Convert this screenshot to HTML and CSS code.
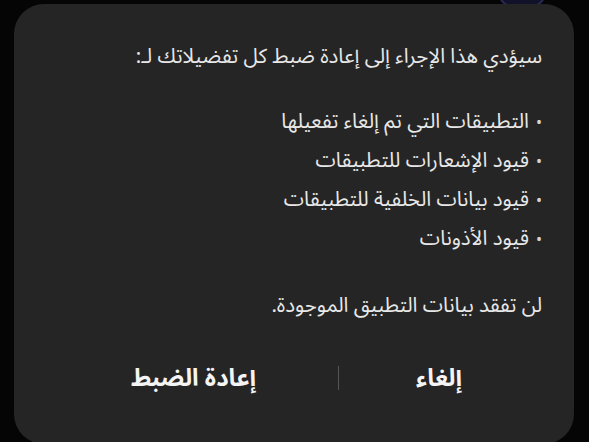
FILE: index.html
```html
<!DOCTYPE html>
<html lang="ar" dir="rtl">
<head>
<meta charset="utf-8">
<link rel="stylesheet" href="styles.css">
</head>
<body>
<div class="backdrop">
  <span class="bg-avatar"></span>
</div>
<div class="dialog">
  <p class="lead">سيؤدي هذا الإجراء إلى إعادة ضبط كل تفضيلاتك لـ:</p>
  <ul class="items">
    <li><span class="dot">•</span>التطبيقات التي تم إلغاء تفعيلها</li>
    <li><span class="dot">•</span>قيود الإشعارات للتطبيقات</li>
    <li><span class="dot">•</span>قيود بيانات الخلفية للتطبيقات</li>
    <li><span class="dot">•</span>قيود الأذونات</li>
  </ul>
  <p class="note">لن تفقد بيانات التطبيق الموجودة.</p>
  <div class="actions">
    <button class="btn btn-cancel">إلغاء</button>
    <span class="divider"></span>
    <button class="btn btn-reset">إعادة الضبط</button>
  </div>
</div>
</body>
</html>
```
FILE: styles.css
```css
html, body {
  margin: 0;
  padding: 0;
}
body {
  width: 589px;
  height: 442px;
  overflow: hidden;
  background: #050505;
  font-family: "Noto Sans Arabic", "Noto Sans", "DejaVu Sans", sans-serif;
  position: relative;
}
.backdrop {
  position: absolute;
  top: 0;
  left: 0;
  width: 589px;
  height: 10px;
}
.bg-avatar {
  position: absolute;
  top: -24px;
  left: 498px;
  width: 44px;
  height: 30px;
  border-radius: 50%;
  border: 2px solid #2a2a55;
  background: #11112a;
}
.dialog {
  position: relative;
  margin: 4px 15px 0 14px;
  height: 440px;
  box-sizing: border-box;
  background: #252525;
  border-radius: 30px;
  padding: 34px 32px 0 32px;
  color: #e8e8e8;
}
.lead {
  margin: 0;
  font-size: 20.5px;
  line-height: 37px;
}
.items {
  list-style: none;
  margin: 28px 0 0 0;
  padding: 0;
  font-size: 20.5px;
  line-height: 37px;
}
.dot {
  display: inline-block;
  width: 13px;
  font-size: 16px;
  color: #d4d4d4;
}
.note {
  margin: 28px 0 0 0;
  font-size: 20.5px;
  line-height: 37px;
}
.actions {
  display: flex;
  align-items: center;
  height: 60px;
  margin: 24px 3px 0 3px;
}
.btn {
  background: none;
  border: none;
  padding: 0;
  font-family: inherit;
  font-size: 24px;
  font-weight: bold;
  color: #f4f4f4;
  height: 60px;
}
.btn-cancel {
  width: 200px;
}
.btn-reset {
  flex: 1;
}
.divider {
  width: 1px;
  height: 24px;
  background: #555;
}
```
